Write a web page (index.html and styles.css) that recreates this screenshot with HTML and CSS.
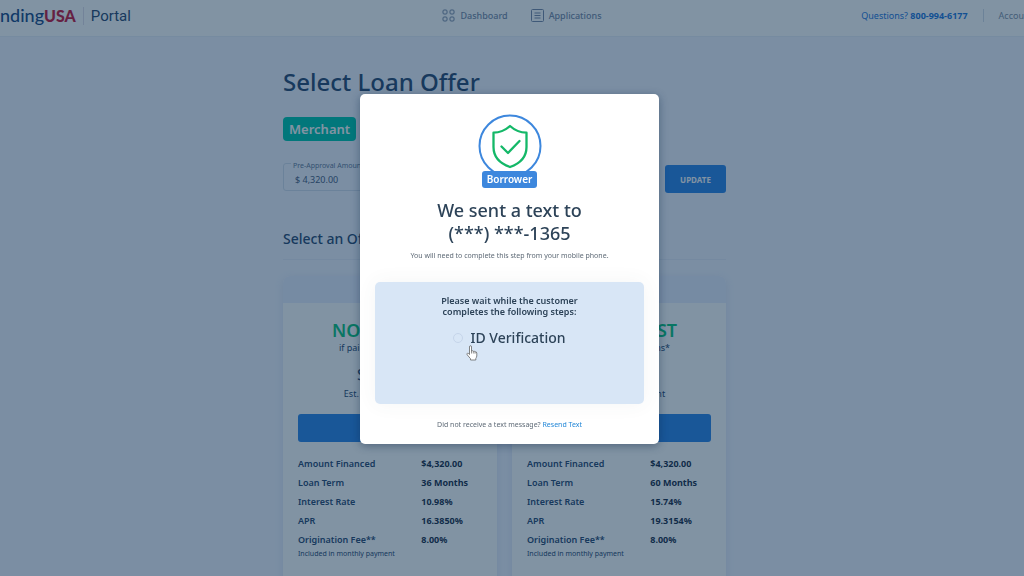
FILE: index.html
```html
<!DOCTYPE html>
<html lang="en">
<head>
  <meta charset="UTF-8" />
  <meta name="viewport" content="width=device-width, initial-scale=1.0"/>
  <title>Select Loan Offer - Portal</title>
  <link rel="stylesheet" href="styles.css">
</head>
<body>

  <header class="topbar">
    <div class="brand">
      <a href="#" class="logo">nding<strong>USA</strong></a>
      <span class="portal">Portal</span>
    </div>
    <nav class="main-nav">
      <a href="#">
        <svg width="13" height="13" viewBox="0 0 13 13" fill="none" stroke="currentColor">
          <rect x="1" y="1" width="4" height="4" rx="1"/>
          <rect x="8" y="1" width="4" height="4" rx="1"/>
          <rect x="1" y="8" width="4" height="4" rx="1"/>
          <rect x="8" y="8" width="4" height="4" rx="1"/>
        </svg>
        Dashboard
      </a>
      <a href="#">
        <svg width="13" height="13" viewBox="0 0 13 13" fill="none" stroke="currentColor">
          <rect x="0.5" y="0.5" width="12" height="12" rx="1"/>
          <path d="M3.5 4h6M3.5 6.5h6M3.5 9h6"/>
        </svg>
        Applications
      </a>
    </nav>
    <div class="account">
      <a href="tel:8009946177" class="phone">Questions? <b>800-994-6177</b></a>
      <a href="#" class="account-link">Accou</a>
    </div>
  </header>

  <main class="page">
    <div class="container">
      <h1>Select Loan Offer</h1>
      <span class="tag">Merchant</span>

      <form class="amount-form">
        <div class="field">
          <label for="amount">Pre-Approval Amount</label>
          <input type="text" id="amount" value="$ 4,320.00">
        </div>
        <button type="button" class="btn">UPDATE</button>
      </form>

      <h2>Select an Offer</h2>

      <div class="offers">
        <section class="offer">
          <div class="offer-top"></div>
          <div class="offer-body">
            <h3>NO INTEREST</h3>
            <p class="terms">if paid within 6 months*</p>
            <p class="payment">$141.33</p>
            <p class="est">Est. monthly payment</p>
            <button type="button" class="btn btn-select">SELECT</button>
            <table>
              <tr><th>Amount Financed</th><td>$4,320.00</td></tr>
              <tr><th>Loan Term</th><td>36 Months</td></tr>
              <tr><th>Interest Rate</th><td>10.98%</td></tr>
              <tr><th>APR</th><td>16.3850%</td></tr>
              <tr><th>Origination Fee**</th><td>8.00%</td></tr>
            </table>
            <p class="note">Included in monthly payment</p>
          </div>
        </section>

        <section class="offer">
          <div class="offer-top"></div>
          <div class="offer-body">
            <h3>NO INTEREST</h3>
            <p class="terms">if paid within 6 months*</p>
            <p class="payment">$104.41</p>
            <p class="est">Est. monthly payment</p>
            <button type="button" class="btn btn-select">SELECT</button>
            <table>
              <tr><th>Amount Financed</th><td>$4,320.00</td></tr>
              <tr><th>Loan Term</th><td>60 Months</td></tr>
              <tr><th>Interest Rate</th><td>15.74%</td></tr>
              <tr><th>APR</th><td>19.3154%</td></tr>
              <tr><th>Origination Fee**</th><td>8.00%</td></tr>
            </table>
            <p class="note">Included in monthly payment</p>
          </div>
        </section>
      </div>
    </div>
  </main>

  <div class="overlay">
    <div class="modal" role="dialog" aria-labelledby="modalTitle">
      <div class="badge">
        <svg width="64" height="64" viewBox="0 0 64 64" fill="none" stroke-linecap="round" stroke-linejoin="round">
          <circle cx="32" cy="32" r="30.5" stroke="#3d87dd" stroke-width="2"/>
          <path d="M32 12C27 16.500 21.500 18.500 15.500 18.700V33C15.500 43 22 49.500 32 53C42 49.500 48.500 43 48.500 33V18.700C42.500 18.500 37 16.500 32 12Z" stroke="#14b868" stroke-width="2.300"/>
          <path d="M23.500 32.500L30 39L41.500 27" stroke="#14b868" stroke-width="2.300"/>
        </svg>
        <span class="badge-label">Borrower</span>
      </div>
      <h2 id="modalTitle" class="modal-title">We sent a text to<br>(***) ***-1365</h2>
      <p class="modal-text">You will need to complete this step from your mobile phone.</p>

      <div class="steps">
        <p class="steps-title">Please wait while the customer<br>completes the following steps:</p>
        <div class="step"><span class="step-dot"></span>ID Verification</div>
      </div>

      <p class="modal-text">Did not receive a text message? <a href="#">Resend Text</a></p>

      <svg class="cursor" width="12" height="16" viewBox="0 0 12 16">
        <path d="M3.500 9.500V2Q3.500 .7 4.500 .7T5.500 2V6Q6.500 5.200 7.300 6.300Q8.300 5.700 9 6.900Q10.500 6.300 10.800 8V11Q10.500 12.500 9.800 13.500V15H4.500V13.700L1.200 9.800Q.5 8.700 1.500 8.200Q2.400 7.900 3.500 9.500Z" fill="#fff" stroke="#666" stroke-width=".8" stroke-linejoin="round"/>
        <path d="M5.500 6v2.500M7.300 6.300v2.200M9 6.900v1.800" stroke="#666" stroke-width=".7"/>
      </svg>
    </div>
  </div>

</body>
</html>
```

FILE: styles.css
```css
* {
  margin: 0;
  padding: 0;
  box-sizing: border-box;
  font-family: 'Noto Sans', 'Open Sans', sans-serif;
}

html, body {
  height: 100%;
}

body {
  overflow: hidden;
  background: #f2f5ff;
  color: #2c4a72;
}

a {
  color: inherit;
  text-decoration: none;
}

/* top bar */
.topbar {
  display: grid;
  grid-template-columns: 1fr auto 1fr;
  align-items: center;
  height: 37px;
  padding-bottom: 5px;
  background: #fff;
  border-bottom: 1px solid #e9eef8;
}

.brand {
  display: flex;
  align-items: center;
}

.logo {
  font-family: Lato, sans-serif;
  font-size: 18px;
  line-height: 20px;
  font-weight: 500;
  color: #1d4a86;
}

.logo strong {
  font-family: Lato, sans-serif;
  font-size: 16px;
  font-weight: 900;
  color: #c8193c;
}

.portal {
  margin-left: 7px;
  padding-left: 7px;
  border-left: 1px solid #e3dfea;
  font-family: Roboto, sans-serif;
  font-size: 15px;
  line-height: 18px;
  color: #2c4a72;
}

.main-nav {
  display: flex;
  gap: 23px;
  padding-left: 20px;
}

.main-nav a {
  display: flex;
  align-items: center;
  gap: 5px;
  font-size: 9px;
  font-weight: 500;
  color: #7a8ba8;
}

.account {
  display: flex;
  justify-content: flex-end;
  align-items: center;
  font-size: 9px;
}

.phone {
  padding-right: 15px;
  border-right: 1px solid #d5dce8;
  color: #1f78dd;
}

.account-link {
  padding-left: 15px;
  color: #8593a8;
}

/* page */
.page {
  padding: 28px 15px 0 0;
}

.container {
  width: 100%;
  max-width: 443px;
  margin: 0 auto;
}

h1 {
  font-size: 24px;
  line-height: 34px;
  font-weight: 500;
}

.tag {
  display: inline-block;
  margin-top: 18px;
  padding: 0 6px;
  border-radius: 4px;
  background: #00c7ae;
  color: #fff;
  font-size: 13px;
  line-height: 24px;
  font-weight: 600;
}

.amount-form {
  display: flex;
  align-items: flex-end;
  gap: 10px;
  margin-top: 22px;
}

.field {
  position: relative;
  flex: 1;
  padding-bottom: 2px;
}

.field label {
  position: absolute;
  top: -2px;
  left: 8px;
  padding: 0 2px;
  background: #f2f5ff;
  font-size: 7px;
  line-height: 10px;
  color: #667a99;
}

.field input {
  width: 100%;
  height: 28px;
  padding: 4px 11px 0;
  border: 1px solid #d3dcec;
  border-radius: 3px;
  background: transparent;
  font-size: 9px;
  color: #4b607f;
}

.btn {
  width: 61px;
  height: 28px;
  border: none;
  border-radius: 3px;
  background: #2f86e8;
  color: #fff;
  font-size: 8px;
  font-weight: 700;
  cursor: pointer;
}

.container h2 {
  margin-top: 35px;
  padding-bottom: 9px;
  border-bottom: 1px solid #e6ebf8;
  font-size: 14px;
  line-height: 22px;
  font-weight: 500;
}

.offers {
  display: grid;
  grid-template-columns: 1fr 1fr;
  gap: 15px;
  margin-top: 16px;
}

.offer {
  border-radius: 7px;
  background: #fff;
  box-shadow: 0 2px 10px rgba(80, 110, 180, 0.12);
}

.offer-top {
  height: 27px;
  border-radius: 7px 7px 0 0;
  background: #e9eeff;
}

.offer-body {
  padding: 15px 15px 40px;
  text-align: center;
}

.offer h3 {
  font-size: 18px;
  line-height: 24px;
  font-weight: 600;
  color: #0fc47e;
}

.terms {
  font-size: 9px;
  line-height: 12px;
}

.payment {
  margin-top: 8px;
  font-size: 18px;
  line-height: 24px;
}

.est {
  font-size: 9px;
  line-height: 16px;
}

.btn-select {
  width: 100%;
  margin: 12px 0;
}

.offer table {
  width: 100%;
  border-collapse: collapse;
  font-size: 9px;
  line-height: 19px;
  text-align: left;
}

.offer th {
  width: 67%;
  font-weight: 600;
}

.offer td {
  color: #1d2f4a;
  font-weight: 700;
}

.note {
  margin-top: 1px;
  font-size: 7px;
  line-height: 8px;
  text-align: left;
}

/* text sent modal */
.overlay {
  position: fixed;
  inset: 0;
  display: flex;
  align-items: center;
  justify-content: center;
  padding: 0 5px 38px 0;
  background: rgba(3, 39, 71, 0.5);
}

.modal {
  position: relative;
  width: 100%;
  max-width: 299px;
  padding: 20px 15px 13px;
  border-radius: 5px;
  background: #fff;
  box-shadow: 0 2px 8px rgba(10, 35, 70, 0.4);
  color: #2d4358;
  text-align: center;
}

.badge {
  display: flex;
  flex-direction: column;
  align-items: center;
}

.badge-label {
  margin-top: -7px;
  padding: 0 5px;
  border-radius: 3px;
  background: #3d87dd;
  color: #fff;
  font-size: 10px;
  line-height: 17px;
  font-weight: 600;
}

.modal-title {
  margin: 11px 0 5px;
  font-size: 18px;
  line-height: 23px;
  font-weight: 500;
}

.modal-text {
  font-size: 7px;
  line-height: 12px;
  color: #5f6b77;
}

.modal-text a {
  color: #2488d8;
}

.steps {
  min-height: 122px;
  margin: 20px 0 15px;
  padding-top: 13px;
  border-radius: 5px;
  background: #d8e6f6;
  box-shadow: 0 0 20px rgba(60, 90, 80, 0.06);
}

.steps-title {
  font-size: 9px;
  line-height: 11px;
  font-weight: 600;
}

.step {
  display: flex;
  align-items: center;
  justify-content: center;
  gap: 7px;
  margin-top: 11px;
  font-size: 14px;
  line-height: 20px;
  font-weight: 500;
}

.step-dot {
  width: 10px;
  height: 10px;
  border: 1px solid #c6d5ea;
  border-radius: 50%;
}

.cursor {
  position: absolute;
  top: 251px;
  left: 106px;
}
```
